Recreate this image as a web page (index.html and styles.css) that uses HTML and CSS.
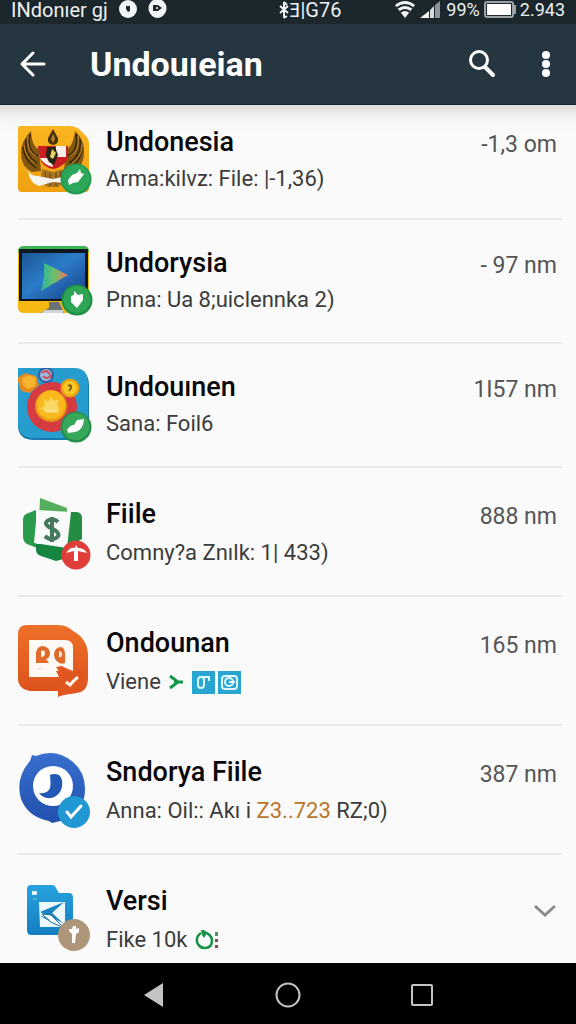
FILE: index.html
```
<!DOCTYPE html>
<html lang="id">

<head>
    <meta charset="UTF-8">
    <meta name="viewport" content="width=device-width, initial-scale=1.0">
    <title>Undouıeian</title>
    <link rel="stylesheet" href="styles.css">
</head>

<body>
    <div class="screen">

        <!--Status bar-->
        <div class="statusBar">
            <div class="statusLeft">
                <span class="carrier">INdonıer gj</span>
                <svg width="50" height="20" viewBox="119 0 50 20">
                    <circle cx="129" cy="9" r="9" fill="#f2f4f5" />
                    <path d="M127 6h4v5l-2 1-2-3z" fill="#1c272e" />
                    <path d="M149.500 8a9 9 0 0 1 18 0c0 6-5 10-9 10s-9-4-9-10z" fill="#f2f4f5" />
                    <path d="M154 5h5l4 3-4 3h-5z" fill="#1c272e" />
                    <circle cx="158" cy="8" r="1" fill="#f2f4f5" />
                </svg>
            </div>
            <div class="statusMid">
                <svg width="10" height="18" viewBox="0 0 10 18" fill="none" stroke="#f2f4f5" stroke-width="2">
                    <path d="M5 1v16M1 5l8 7M9 5l-8 7M5 1l3 3M5 17l3-2" />
                </svg>
                <span>Ǝ|G76</span>
            </div>
            <div class="statusRight">
                <svg width="48" height="20" viewBox="396 0 48 20">
                    <path d="M396 5q10-8 20 0l-10 13z" fill="#f2f4f5" />
                    <path d="M398 8q8-6 16 0M401 12q5-4 10 0" fill="none" stroke="#1c272e" stroke-width="2" />
                    <path d="M421 18l9-7v7z" fill="#f2f4f5" />
                    <path d="M431 10l4-4v12h-4z" fill="#d5dadd" />
                    <path d="M436 5l5-4v17h-5z" fill="#8b959b" />
                </svg>
                <span>99%</span>
                <svg width="34" height="20" viewBox="0 0 34 20">
                    <rect x="2" y="2" width="28" height="15" rx="2" fill="#1c272e" stroke="#9ba3a7" stroke-width="2" />
                    <rect x="4" y="4" width="24" height="11" fill="#fff" />
                    <path d="M32 5v9" stroke="#9ba3a7" stroke-width="2" />
                </svg>
                <span class="clock">2.943</span>
            </div>
        </div>

        <!--App bar-->
        <header class="appBar">
            <button class="iconButton" aria-label="Back">
                <svg width="32" height="32" viewBox="0 0 32 32" fill="none" stroke="#fff" stroke-width="3" stroke-linecap="round" stroke-linejoin="round">
                    <path d="M27 16H5M16 5L5 16l11 11" />
                </svg>
            </button>
            <h1>Undouıeian</h1>
            <button class="iconButton" aria-label="Search">
                <svg width="32" height="32" viewBox="0 0 32 32" fill="none" stroke="#fff" stroke-linecap="round">
                    <circle cx="13" cy="12" r="8.500" stroke-width="3" />
                    <path d="M19 19l8 8" stroke-width="4" />
                </svg>
            </button>
            <button class="iconButton" aria-label="More">
                <svg width="32" height="32" viewBox="0 0 32 32" fill="#fff">
                    <circle cx="16" cy="7" r="4" />
                    <circle cx="16" cy="16" r="4" />
                    <circle cx="16" cy="25" r="4" />
                </svg>
            </button>
        </header>

        <!--List-->
        <main class="content">
            <ul class="list">
                <li class="row first">
                    <svg class="rowIcon" viewBox="18 123 76 76">
                        <defs>
                            <linearGradient id="gold" x1="0" y1="0" x2="0" y2="1">
                                <stop offset="0" stop-color="#fbb620" />
                                <stop offset="1" stop-color="#f0a010" />
                            </linearGradient>
                        </defs>
                        <path d="M20 126h50q5 0 9 3l7 7q3 3 3 8v44q0 4-4 4H22q-4 0-4-4v-59q0-3 2-3z" fill="url(#gold)" />
                        <path d="M31 131q-10 10-10 22 0 14 11 19l9-1-2-22q-7-2-8-18z" fill="#83570f" />
                        <path d="M75 131q10 9 9 22 0 14-11 19l-9-1 2-22q7-2 9-18z" fill="#83570f" />
                        <path d="M30 134q-4 16 8 22M26 139q-2 16 11 24M23 147q1 13 13 21M76 134q3 16-8 22M80 139q2 16-11 24M82 147q0 13-12 21" fill="none" stroke="#35240b" stroke-width="1.500" />
                        <path d="M28 136q-2 15 8 20M24 145q1 12 11 18M78 136q2 15-8 20M82 145q0 12-10 18" fill="none" stroke="#c18a20" stroke-width="1" />
                        <path d="M53 129l5 9q1 6-5 7-6-1-5-7z" fill="#4c3310" />
                        <path d="M53 134l2 5-2 4-2-4z" fill="#b78425" />
                        <path d="M38 146h30v12q-4 9-15 11-11-2-13-11z" fill="#c91e22" />
                        <path d="M56 146h10v11H56zM40 158h11l2 9q-9-2-13-9z" fill="#f8eee9" />
                        <path d="M47 147h8l3 8-4 10-5-3-3-6z" fill="#292313" />
                        <path d="M52 149l4 4-3 6-3-2z" fill="#e8d35f" />
                        <path d="M42 169l11 3 11-3 3 12-9 6H48l-8-5z" fill="#a87620" />
                        <path d="M45 172l2 12M50 173v13M56 173v13M61 171l-2 13" stroke="#5c3d12" />
                        <path d="M28 171q3 5 10 5l15 3 13-3q7-1 9-5l-2 8q-5 5-10 4l-10-1-14 4q-9-2-11-15z" fill="#f7f4ef" />
                        <circle cx="76" cy="179" r="15.500" fill="#229c50" />
                        <circle cx="76" cy="178.500" r="13.500" fill="#2da75a" />
                        <path d="M68 180l4-5 5-2 3-4 1 4 3 1-3 4-3 4-5 1-4 2z" fill="#fff" />
                    </svg>
                    <div class="rowText">
                        <h2>Undonesia</h2>
                        <p>Arma:kilvz: File: |-1,36)</p>
                    </div>
                    <span class="distance">-1,3 om</span>
                </li>

                <li class="row compact">
                    <svg class="rowIcon" viewBox="18 244 76 76">
                        <defs>
                            <linearGradient id="tvScreen" x1="0" y1="0" x2="1" y2="1">
                                <stop offset="0" stop-color="#1b5794" />
                                <stop offset="0.450" stop-color="#2c7cc9" />
                                <stop offset="1" stop-color="#183e86" />
                            </linearGradient>
                            <linearGradient id="playFill" x1="0" y1="0" x2="1" y2="0">
                                <stop offset="0" stop-color="#27b7a0" />
                                <stop offset="0.500" stop-color="#6dc06a" />
                                <stop offset="1" stop-color="#ee6b63" />
                            </linearGradient>
                        </defs>
                        <rect x="18" y="246" width="71" height="67" rx="5" fill="#f6b914" />
                        <path d="M18 252q0-6 6-6h60q5 0 5 6z" fill="#3bb657" />
                        <path d="M19 249h69v52H19z" fill="#0d1722" />
                        <path d="M22 253h63v46H22z" fill="url(#tvScreen)" />
                        <path d="M49 302h10l5 11H40l9-5z" fill="#6b7177" />
                        <path d="M41 313l4-3h18v3z" fill="#d1d4d5" />
                        <path d="M44 263l24 12-27 16 3-14z" fill="url(#playFill)" />
                        <circle cx="77" cy="300" r="15.500" fill="#1c9146" />
                        <circle cx="77" cy="299.500" r="13.500" fill="#2da456" />
                        <path d="M74 291l4 4 5-1v6l-6 8-6-6v-6l3-1z" fill="#fff" />
                    </svg>
                    <div class="rowText">
                        <h2>Undorysia</h2>
                        <p>Pnna: Ua 8;uiclennka 2)</p>
                    </div>
                    <span class="distance">- 97 nm</span>
                </li>

                <li class="row compact">
                    <svg class="rowIcon" viewBox="18 368 76 76">
                        <path d="M18 370h56q15 0 15 15v40q0 15-15 15H34q-16 0-16-15z" fill="#1678ae" />
                        <path d="M18 368h56q14 0 14 15v40q0 15-14 15H34q-16 0-16-15z" fill="#269dce" />
                        <circle cx="52" cy="407" r="25" fill="#d63b42" />
                        <circle cx="51" cy="406" r="16" fill="#e59216" />
                        <circle cx="51" cy="405" r="14.500" fill="#f9b91e" />
                        <path d="M44 399l4 3 3-5 3 4 5-1-2 6 3 3-7 1-4 3-4-3-5-1 5-4z" fill="#fbd764" />
                        <path d="M46 411h11" stroke="#fbe08a" stroke-width="3" stroke-linecap="round" />
                        <path d="M17 378l8-5 11 3 3 9-9 8-9-2z" fill="#e68a22" />
                        <path d="M22 378l7-3 7 3-1 8-7 3-5-4z" fill="#f9b52d" />
                        <circle cx="46" cy="375" r="8" fill="#315fa5" />
                        <circle cx="46" cy="375" r="6" fill="#9db9dc" />
                        <path d="M42 373q4-4 7 0t2 3q-5 4-8 0" fill="none" stroke="#c84b54" stroke-width="2" />
                        <circle cx="70" cy="388" r="9.500" fill="#e9a310" />
                        <circle cx="70" cy="388" r="7" fill="#fac927" />
                        <path d="M68 386q4-2 3 2l-2 3" fill="none" stroke="#806018" stroke-width="2" />
                        <circle cx="76" cy="427" r="15.500" fill="#238f4b" />
                        <circle cx="76" cy="426.500" r="13.500" fill="#37a75b" />
                        <path d="M67 430q3-5 7-5l3-5 7-1-1 6q-3 6-8 7l-7 1z" fill="#fff" />
                    </svg>
                    <div class="rowText">
                        <h2>Undouınen</h2>
                        <p>Sana: Foil6</p>
                    </div>
                    <span class="distance">1I57 nm</span>
                </li>

                <li class="row">
                    <svg class="rowIcon" viewBox="18 496 76 76">
                        <path d="M40 499l27 10v12H39z" fill="#55af5c" />
                        <path d="M36 511l-10 4q-3 2-3 6v16q0 6 4 8l10 4z" fill="#299b4b" />
                        <path d="M66 513h11q5 1 5 6v21l-15 9z" fill="#248d42" />
                        <path d="M36 545h35v13l-15 4-15-5q-5-2-5-6z" fill="#168542" />
                        <path d="M37 511l34 2-4 36-33-5z" fill="#f8faf9" />
                        <path d="M58 523q-4-4-9-2-6 3 0 7l7 4q5 4 0 7-6 3-11-2M52 518v25" fill="none" stroke="#45785c" stroke-width="4" />
                        <circle cx="76" cy="556" r="14.500" fill="#df3e3a" />
                        <path d="M66 554q4-6 9-5l1-3 2 3q6 0 9 5l-9-2v10h-4v-10z" fill="#fff" />
                    </svg>
                    <div class="rowText">
                        <h2>Fiile</h2>
                        <p>Comny?a Znılk: 1| 433)</p>
                    </div>
                    <span class="distance">888 nm</span>
                </li>

                <li class="row">
                    <svg class="rowIcon" viewBox="18 624 76 76">
                        <defs>
                            <linearGradient id="orange" x1="0" y1="0" x2="0" y2="1">
                                <stop offset="0" stop-color="#ee7028" />
                                <stop offset="1" stop-color="#dc501b" />
                            </linearGradient>
                        </defs>
                        <path d="M27 625h31q9 0 15 6 15 8 15 25v22q0 14-12 15l-11 1-7 3v-6H30q-12-2-12-13v-44q0-9 9-9z" fill="url(#orange)" />
                        <path d="M29 640h36q8 0 8 8v23l-12-5v4l-5 1 3 6H29z" fill="#fff9f5" />
                        <path d="M36 663v-10q1-7 7-7 7 1 7 8-1 5-4 5l3 4zM54 654q1-7 7-7 4 1 4 7v9q-4 2-7-1-4-3-4-8z" fill="#e26b2c" />
                        <path d="M41 651q4-2 4 2 0 4-4 4zM59 651q3 0 3 4-1 3-3 2z" fill="#fff1e4" />
                        <path d="M37 669h5" stroke="#f5cebb" />
                        <path d="M56 667l6-1 8 8 8-4 6 2v15l-9 6-16 3-1-9 5-5v-6z" fill="#df561f" />
                        <path d="M66 682l4 3q3-4 8-8" fill="none" stroke="#fff3e8" stroke-width="3" />
                    </svg>
                    <div class="rowText">
                        <h2>Ondounan</h2>
                        <p class="withIcons">
                            <span>Viene</span>
                            <svg width="16" height="18" viewBox="0 0 16 18" fill="none" stroke="#149748" stroke-width="3">
                                <path d="M2 3l8 6-8 6M6 9h9" />
                            </svg>
                            <svg width="50" height="24" viewBox="190 670 50 24">
                                <path d="M191 671h23v23h-23zM217 671h23v23h-23z" fill="#27a6d1" />
                                <rect x="197" y="677" width="6" height="11" rx="3" fill="none" stroke="#dff6fd" stroke-width="2" />
                                <path d="M201 677h7v4" fill="none" stroke="#dff6fd" stroke-width="2" />
                                <rect x="221" y="676" width="15" height="13" rx="3" fill="none" stroke="#dff6fd" stroke-width="2" />
                                <circle cx="228" cy="682" r="4" fill="none" stroke="#dff6fd" stroke-width="2" />
                                <path d="M228 682h6" stroke="#dff6fd" stroke-width="2" />
                            </svg>
                        </p>
                    </div>
                    <span class="distance">165 nm</span>
                </li>

                <li class="row">
                    <svg class="rowIcon" viewBox="18 752 76 76">
                        <defs>
                            <linearGradient id="blue" x1="0" y1="0" x2="0" y2="1">
                                <stop offset="0" stop-color="#376fce" />
                                <stop offset="1" stop-color="#2350ad" />
                            </linearGradient>
                        </defs>
                        <path d="M32 754l4 1q20-8 37 6 12 10 12 27 0 20-17 29-6 3-12 4l-4 1-3-2q-21-4-28-22-6-21 9-38z" fill="url(#blue)" />
                        <circle cx="53" cy="785" r="20" fill="#fff" />
                        <path d="M50 774q4-2 9 0 4 3 3 12-2 9-11 11-8 1-12-5 9 1 11-5 1-4 0-13z" fill="#2458b5" />
                        <circle cx="74" cy="811" r="16" fill="#2198d4" />
                        <path d="M67 811l4 5 10-11" fill="none" stroke="#fff" stroke-width="3" stroke-linecap="round" />
                    </svg>
                    <div class="rowText">
                        <h2>Sndorya Fiile</h2>
                        <p>Anna: Oil:: Akı i <span class="amount">Z3..723</span> RZ;0)</p>
                    </div>
                    <span class="distance">387 nm</span>
                </li>

                <li class="row">
                    <svg class="rowIcon" viewBox="18 880 76 76">
                        <defs>
                            <linearGradient id="sky" x1="0" y1="0" x2="0" y2="1">
                                <stop offset="0" stop-color="#28a2df" />
                                <stop offset="1" stop-color="#147fc0" />
                            </linearGradient>
                        </defs>
                        <path d="M31 883h21q3 0 4 3l3 5h10q4 0 4 5v35q0 2-3 2H31q-4 0-4-5v-41q0-4 4-4z" fill="url(#sky)" />
                        <rect x="32" y="889" width="5" height="4" rx="1" fill="#e9f7fd" />
                        <path d="M33 897h4" stroke="#83c9ec" />
                        <path d="M39 900h26v25H40z" fill="#edf8fc" />
                        <path d="M40 910l24-10-12 11 11 10zM40 914l12 2 9 9-21-11z" fill="#1682c0" />
                        <path d="M42 912l9 1 13 13-13-6z" fill="#fff" stroke="#1c6e9e" />
                        <circle cx="74" cy="933" r="16" fill="#ad9679" />
                        <path d="M73 924h3v3l3-1v4l-3 2-1 9h-3v-9l-3-3v-2h3z" fill="#fff" />
                    </svg>
                    <div class="rowText">
                        <h2>Versi</h2>
                        <p class="withIcons">
                            <span>Fike 10k</span>
                            <svg width="26" height="22" viewBox="195 927 26 22">
                                <path d="M202 931q-5 3-4 9 2 6 8 6 7 0 7-8-1-6-8-8" fill="none" stroke="#169044" stroke-width="2.500" />
                                <path d="M202 928h3l3 3-3 5-2-3z" fill="#169044" />
                                <path d="M216 930h3v4h-3z" fill="#4c9655" />
                                <path d="M216 937h3v3h-3zM216 943h3v3h-3z" fill="#775343" />
                            </svg>
                        </p>
                    </div>
                    <button class="expand" aria-label="Expand">
                        <svg width="24" height="16" viewBox="0 0 24 16" fill="none" stroke="#8a8a8a" stroke-width="3">
                            <path d="M2 3l10 9 10-9" />
                        </svg>
                    </button>
                </li>
            </ul>
        </main>

        <!--Navigation bar-->
        <nav class="navBar">
            <button aria-label="Back">
                <svg width="28" height="28" viewBox="0 0 28 28">
                    <path d="M4 14l19-12v24z" fill="#c4c4c4" />
                </svg>
            </button>
            <button aria-label="Home">
                <svg width="28" height="28" viewBox="0 0 28 28">
                    <circle cx="14" cy="14" r="11.500" fill="none" stroke="#c4c4c4" stroke-width="2" />
                </svg>
            </button>
            <button aria-label="Recent">
                <svg width="28" height="28" viewBox="0 0 28 28">
                    <rect x="4" y="4" width="20" height="20" rx="1" fill="none" stroke="#c4c4c4" stroke-width="2" />
                </svg>
            </button>
        </nav>
    </div>
</body>

</html>
```
FILE: styles.css
```
* {
    box-sizing: border-box;
}

body {
    margin: 0;
    font-family: Roboto, "Noto Sans", sans-serif;
    background-color: #fafafa;
    color: #080808;
}

h1,
h2,
p,
ul {
    margin: 0;
    padding: 0;
}

svg {
    display: block;
    flex-shrink: 0;
}

button {
    display: flex;
    align-items: center;
    justify-content: center;
    padding: 0;
    border: none;
    background: none;
    cursor: pointer;
}

.screen {
    display: flex;
    flex-direction: column;
    min-height: 100vh;
}

/* status bar */

.statusBar {
    display: grid;
    grid-template-columns: 6fr auto 5fr;
    align-items: center;
    height: 24px;
    padding: 0 11px 4px;
    background-color: #1b262d;
    color: #eef1f2;
    font-size: 20px;
    line-height: 20px;
    white-space: nowrap;
}

.statusLeft,
.statusMid,
.statusRight {
    display: flex;
    align-items: center;
}

.statusLeft {
    gap: 10px;
}

.statusRight {
    justify-content: flex-end;
    gap: 3px;
    font-size: 18px;
}

/* app bar */

.appBar {
    display: flex;
    align-items: center;
    height: 81px;
    padding: 0 14px 0 17px;
    background-color: #263640;
    color: #fff;
    border-bottom: 1px solid #17232b;
}

.appBar h1 {
    flex: 1;
    margin-left: 41px;
    font-size: 34px;
    line-height: 40px;
    font-weight: 700;
}

.iconButton {
    width: 32px;
    height: 32px;
}

.iconButton + .iconButton {
    margin-left: 32px;
}

/* list */

.content {
    flex: 1;
    background: linear-gradient(#dcdcdc, #f7f7f7 16px, #fafafa 32px);
}

.list {
    list-style: none;
}

.row {
    display: flex;
    align-items: flex-start;
    min-height: 129px;
    margin: 0 14px 0 18px;
    padding: 27px 5px 0 0;
    border-bottom: 2px solid #e9e9e9;
}

.row:last-child {
    min-height: 108px;
    border-bottom: none;
}

.row.compact {
    min-height: 124px;
    padding-top: 24px;
}

.row.first {
    min-height: 115px;
    padding-top: 18px;
}

.rowIcon {
    width: 76px;
    height: 76px;
}

.rowText {
    flex: 1;
    margin-left: 12px;
}

.rowText h2 {
    font-size: 27px;
    line-height: 38px;
    font-weight: 500;
}

.rowText p {
    color: #3c3c3c;
    font-size: 22px;
    line-height: 40px;
}

.first p,
.compact p {
    line-height: 36px;
}

.rowText .withIcons {
    display: flex;
    align-items: center;
    gap: 7px;
}

.amount {
    color: #b9772b;
}

.distance {
    color: #555;
    font-size: 23px;
    line-height: 44px;
}

.expand {
    width: 24px;
    height: 58px;
}

/* navigation bar */

.navBar {
    display: flex;
    align-items: center;
    justify-content: center;
    gap: 106px;
    height: 61px;
    padding-top: 2px;
    background-color: #000;
}
```
